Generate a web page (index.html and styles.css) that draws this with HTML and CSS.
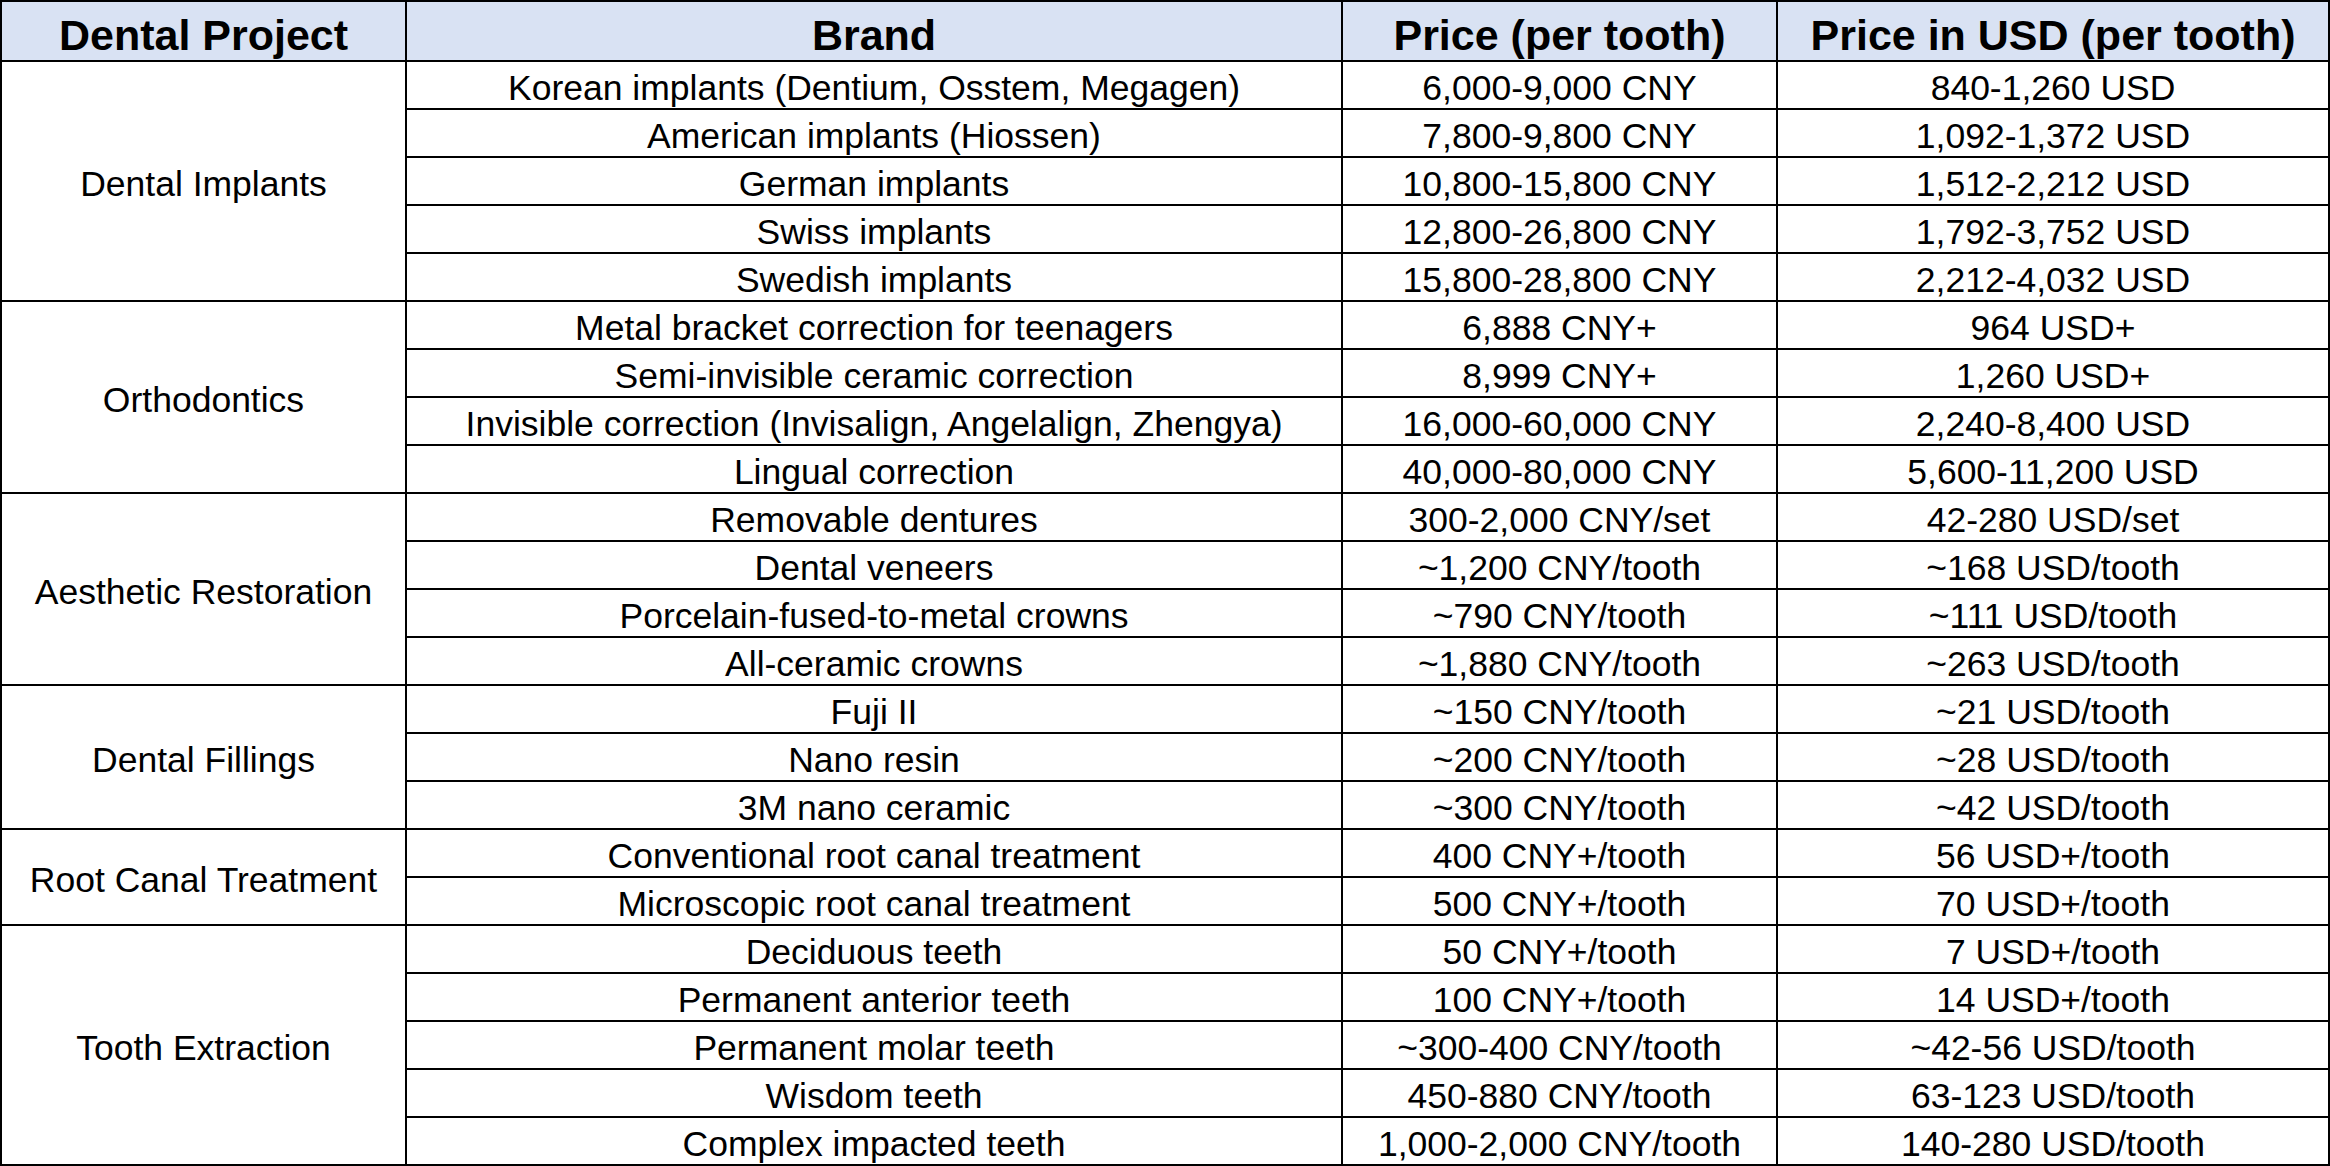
FILE: index.html
```html
<!DOCTYPE html>
<html lang="en">
<head>
<meta charset="utf-8">
<title>Dental Prices</title>
<link rel="stylesheet" href="styles.css">
</head>
<body>
<div class="table">
  <div class="cell head">Dental Project</div>
  <div class="cell head">Brand</div>
  <div class="cell head">Price (per tooth)</div>
  <div class="cell head">Price in USD (per tooth)</div>

  <div class="cell group span5">Dental Implants</div>
  <div class="cell">Korean implants (Dentium, Osstem, Megagen)</div><div class="cell">6,000-9,000 CNY</div><div class="cell">840-1,260 USD</div>
  <div class="cell">American implants (Hiossen)</div><div class="cell">7,800-9,800 CNY</div><div class="cell">1,092-1,372 USD</div>
  <div class="cell">German implants</div><div class="cell">10,800-15,800 CNY</div><div class="cell">1,512-2,212 USD</div>
  <div class="cell">Swiss implants</div><div class="cell">12,800-26,800 CNY</div><div class="cell">1,792-3,752 USD</div>
  <div class="cell">Swedish implants</div><div class="cell">15,800-28,800 CNY</div><div class="cell">2,212-4,032 USD</div>

  <div class="cell group span4">Orthodontics</div>
  <div class="cell">Metal bracket correction for teenagers</div><div class="cell">6,888 CNY+</div><div class="cell">964 USD+</div>
  <div class="cell">Semi-invisible ceramic correction</div><div class="cell">8,999 CNY+</div><div class="cell">1,260 USD+</div>
  <div class="cell">Invisible correction (Invisalign, Angelalign, Zhengya)</div><div class="cell">16,000-60,000 CNY</div><div class="cell">2,240-8,400 USD</div>
  <div class="cell">Lingual correction</div><div class="cell">40,000-80,000 CNY</div><div class="cell">5,600-11,200 USD</div>

  <div class="cell group span4">Aesthetic Restoration</div>
  <div class="cell">Removable dentures</div><div class="cell">300-2,000 CNY/set</div><div class="cell">42-280 USD/set</div>
  <div class="cell">Dental veneers</div><div class="cell">~1,200 CNY/tooth</div><div class="cell">~168 USD/tooth</div>
  <div class="cell">Porcelain-fused-to-metal crowns</div><div class="cell">~790 CNY/tooth</div><div class="cell">~111 USD/tooth</div>
  <div class="cell">All-ceramic crowns</div><div class="cell">~1,880 CNY/tooth</div><div class="cell">~263 USD/tooth</div>

  <div class="cell group span3">Dental Fillings</div>
  <div class="cell">Fuji II</div><div class="cell">~150 CNY/tooth</div><div class="cell">~21 USD/tooth</div>
  <div class="cell">Nano resin</div><div class="cell">~200 CNY/tooth</div><div class="cell">~28 USD/tooth</div>
  <div class="cell">3M nano ceramic</div><div class="cell">~300 CNY/tooth</div><div class="cell">~42 USD/tooth</div>

  <div class="cell group span2">Root Canal Treatment</div>
  <div class="cell">Conventional root canal treatment</div><div class="cell">400 CNY+/tooth</div><div class="cell">56 USD+/tooth</div>
  <div class="cell">Microscopic root canal treatment</div><div class="cell">500 CNY+/tooth</div><div class="cell">70 USD+/tooth</div>

  <div class="cell group span5">Tooth Extraction</div>
  <div class="cell">Deciduous teeth</div><div class="cell">50 CNY+/tooth</div><div class="cell">7 USD+/tooth</div>
  <div class="cell">Permanent anterior teeth</div><div class="cell">100 CNY+/tooth</div><div class="cell">14 USD+/tooth</div>
  <div class="cell">Permanent molar teeth</div><div class="cell">~300-400 CNY/tooth</div><div class="cell">~42-56 USD/tooth</div>
  <div class="cell">Wisdom teeth</div><div class="cell">450-880 CNY/tooth</div><div class="cell">63-123 USD/tooth</div>
  <div class="cell">Complex impacted teeth</div><div class="cell">1,000-2,000 CNY/tooth</div><div class="cell">140-280 USD/tooth</div>
</div>
</body>
</html>
```

FILE: styles.css
```css
html, body {
  margin: 0;
  padding: 0;
  background: #ffffff;
}

.table {
  width: 2330px;
  height: 1166px;
  box-sizing: border-box;
  display: grid;
  grid-template-columns: 403px 934px 433px 1fr;
  grid-template-rows: 58px repeat(23, 46px);
  gap: 2px;
  padding: 2px;
  background: #000000;
  font-family: "Liberation Sans", Arial, sans-serif;
  color: #000000;
}

.cell {
  background: #ffffff;
  display: flex;
  align-items: center;
  justify-content: center;
  font-size: 35.5px;
  line-height: 1;
  padding-top: 8px;
  box-sizing: border-box;
  white-space: nowrap;
}

.head {
  background: #d9e2f3;
  font-weight: bold;
  font-size: 43px;
  padding-top: 8px;
}

.span2 { grid-row: span 2; }
.span3 { grid-row: span 3; }
.span4 { grid-row: span 4; }
.span5 { grid-row: span 5; }
```
